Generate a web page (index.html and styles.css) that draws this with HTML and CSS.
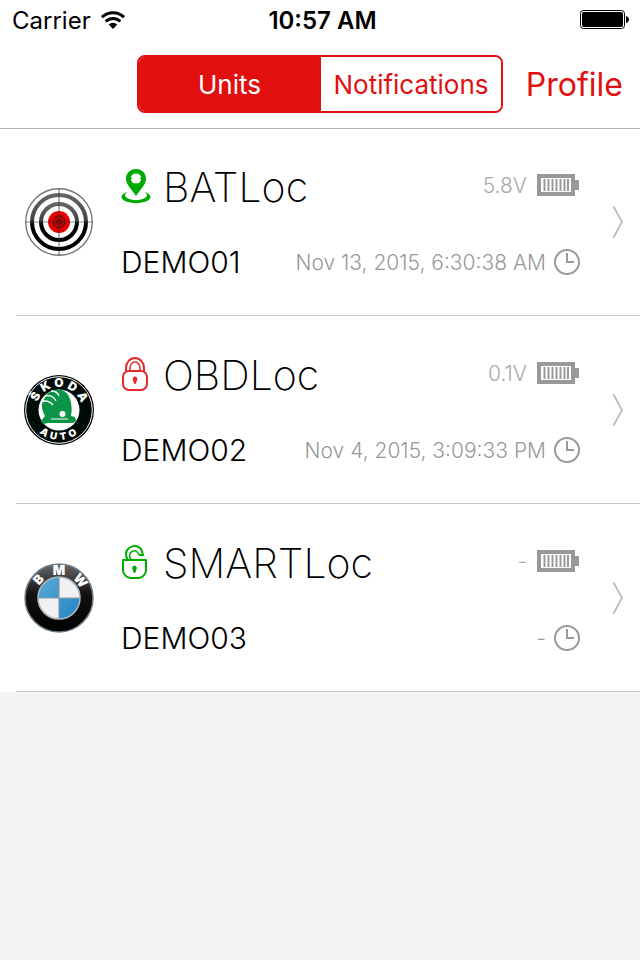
FILE: index.html
```html
<!DOCTYPE html>
<html lang="en">
<head>
  <meta charset="UTF-8" />
  <title>Units</title>
  <meta name="viewport" content="width=device-width, initial-scale=1.0" />
  <link rel="stylesheet" href="styles.css">
</head>
<body>

  <!-- Shared icons -->
  <svg class="sprite" aria-hidden="true">
    <symbol id="battery" viewBox="0 0 42 22">
      <path d="M2 2h34v18H2z" fill="#fff" stroke="#999" stroke-width="4" />
      <path d="M38 6h4v10h-4z" fill="#999" />
      <path d="M7.500 5v12M11.500 5v12M15.500 5v12M19.500 5v12M23.500 5v12M27.500 5v12M31 5v12" stroke="#999" stroke-width="2" />
    </symbol>
    <symbol id="clock" viewBox="0 0 26 26">
      <circle cx="13" cy="13" r="12" fill="none" stroke="#999" stroke-width="2" />
      <path d="M13 4v9h7" fill="none" stroke="#999" stroke-width="2" />
    </symbol>
    <symbol id="chevron" viewBox="0 0 12 34">
      <path d="M1.500 1.500L10 17 1.500 32.500" fill="none" stroke="#c0c0c0" stroke-width="2" />
    </symbol>
  </svg>

  <!-- Status bar -->
  <div class="status-bar">
    <div class="status-left">
      <span>Carrier</span>
      <svg class="wifi" viewBox="0 0 24 18" aria-hidden="true">
        <path d="M12 18L7.700 13.400a6.200 6.200 0 0 1 8.600 0z" />
        <path d="M4.700 10.500a10.500 10.500 0 0 1 14.600 0M1 6.200a16 16 0 0 1 22 0" fill="none" stroke="#000" stroke-width="3" />
      </svg>
    </div>
    <span class="status-time">10:57 AM</span>
    <svg class="status-battery" viewBox="0 0 49 20" aria-hidden="true">
      <rect x="0.500" y="0.500" width="44" height="18" rx="3" fill="none" stroke="#000" />
      <rect x="2" y="2" width="41" height="15" rx="2" />
      <path d="M46 6c4 1 4 6 0 7z" />
    </svg>
  </div>

  <!-- Navigation -->
  <header class="nav">
    <div class="segments">
      <button type="button" class="segment active" aria-pressed="true">Units</button>
      <button type="button" class="segment" aria-pressed="false">Notifications</button>
    </div>
    <a href="#profile" class="profile">Profile</a>
  </header>

  <!-- Unit list -->
  <main class="units">
    <a href="#demo01" class="unit">
      <svg class="logo" viewBox="0 0 70 70" aria-hidden="true">
        <defs>
          <linearGradient id="ring" x1="0" y1="0" x2="0" y2="1">
            <stop offset="0" stop-color="#666" />
            <stop offset="0.450" stop-color="#444" />
            <stop offset="0.550" stop-color="#000" />
          </linearGradient>
        </defs>
        <circle cx="35" cy="35" r="33.300" fill="#fff" stroke="#777" stroke-width="1.400" />
        <circle cx="35" cy="35" r="27" fill="none" stroke="url(#ring)" stroke-width="4" />
        <circle cx="35" cy="35" r="18" fill="none" stroke="url(#ring)" stroke-width="4" />
        <circle cx="35" cy="35" r="11" fill="#e80000" />
        <circle cx="35" cy="35" r="6" fill="#c00000" stroke="#8a0000" stroke-width="1.500" />
        <path d="M35 32l3 3-3 3-3-3z" fill="#900" stroke="#600000" />
        <path d="M35 2v66M2 35h66" stroke="#333" stroke-opacity="0.600" stroke-width="1.200" />
      </svg>
      <div class="unit-body">
        <div class="unit-line">
          <svg class="state" viewBox="0 0 30 36" aria-hidden="true">
            <path d="M15 1C9 1 5 5.300 5 11c0 6 6 10.500 10 17 4-6.500 10-11 10-17C25 5.300 21 1 15 1z" fill="#0a0" />
            <circle cx="15" cy="10.500" r="5.200" fill="#fff" />
            <path d="M15 4.500v2M15 14.500v2M9 10.500h2M19 10.500h2" stroke="#0a0" />
            <path d="M6.500 24C3 25 .5 26.800.5 29c0 3.500 6.500 6 14.500 6s14.500-2.500 14.500-6c0-2.200-2.500-4-6-5 2.300 1.500 3 3 2 4.500C24 30.700 20 32 15 32s-9-1.300-10.500-3.500c-1-1.500-.3-3 2-4.500z" fill="#0a0" />
          </svg>
          <h2>BATLoc</h2>
          <span class="meta voltage">5.8V</span>
          <svg class="battery" aria-hidden="true"><use href="#battery" /></svg>
        </div>
        <div class="unit-line">
          <span class="unit-name">DEMO01</span>
          <span class="meta">Nov 13, 2015, 6:30:38 AM</span>
          <svg class="clock" aria-hidden="true"><use href="#clock" /></svg>
        </div>
      </div>
      <svg class="chevron" aria-hidden="true"><use href="#chevron" /></svg>
    </a>

    <a href="#demo02" class="unit">
      <svg class="logo" viewBox="0 0 70 70" aria-hidden="true">
        <circle cx="35" cy="35" r="35" fill="#000" />
        <circle cx="35" cy="35" r="33.300" fill="#000b08" stroke="#fff" stroke-width="1" />
        <circle cx="35" cy="35" r="20.500" fill="#fff" />
        <path d="M21 41c-3-5-4-11-2-15l4-7 6-4c9-2 15 2 17 9 2 6 2 12 1 17l4 1 1 4-3 2H24l-5 1-2-3z" fill="#0a9448" />
        <path d="M17 27c4-2 9-1 12 3M21 21c5-1 9 1 11 5M27 16c4 0 7 2 8 5" fill="none" stroke="#fff" stroke-width="1.300" />
        <circle cx="38.500" cy="39" r="3" fill="#fff" />
        <path d="M27 44h17" stroke="#fff" />
        <g class="logo-letters">
          <text class="skoda" transform="rotate(-60 35 35)" x="35" y="12">Š</text>
          <text class="skoda" transform="rotate(-30 35 35)" x="35" y="12">K</text>
          <text class="skoda" x="35" y="12">O</text>
          <text class="skoda" transform="rotate(30 35 35)" x="35" y="12">D</text>
          <text class="skoda" transform="rotate(61 35 35)" x="35" y="12">A</text>
          <text class="auto" transform="rotate(33 35 35)" x="35" y="65">A</text>
          <text class="auto" transform="rotate(12 35 35)" x="35" y="65">U</text>
          <text class="auto" transform="rotate(-9 35 35)" x="35" y="65">T</text>
          <text class="auto" transform="rotate(-30 35 35)" x="35" y="65">O</text>
        </g>
      </svg>
      <div class="unit-body">
        <div class="unit-line">
          <svg class="state" viewBox="0 0 30 36" fill="none" stroke="#e8282d" aria-hidden="true">
            <rect x="2" y="15" width="24" height="19" rx="6" stroke-width="2" />
            <path d="M5 15v-3a9 10 0 0 1 18 0v3" stroke-width="2" />
            <path d="M9 15v-3a5 6 0 0 1 10 0v3" stroke-width="1.500" />
            <path d="M14 20.500a2.500 2.500 0 0 1 1.700 4.200l-.7 3h-2l-.7-3a2.500 2.500 0 0 1 1.700-4.200z" fill="#e8282d" stroke="none" />
          </svg>
          <h2>OBDLoc</h2>
          <span class="meta voltage">0.1V</span>
          <svg class="battery" aria-hidden="true"><use href="#battery" /></svg>
        </div>
        <div class="unit-line">
          <span class="unit-name">DEMO02</span>
          <span class="meta">Nov 4, 2015, 3:09:33 PM</span>
          <svg class="clock" aria-hidden="true"><use href="#clock" /></svg>
        </div>
      </div>
      <svg class="chevron" aria-hidden="true"><use href="#chevron" /></svg>
    </a>

    <a href="#demo03" class="unit">
      <svg class="logo" viewBox="0 0 70 70" aria-hidden="true">
        <defs>
          <linearGradient id="gloss" x1="0" y1="0" x2="0" y2="1">
            <stop offset="0" stop-color="#666" />
            <stop offset="0.450" stop-color="#111" />
            <stop offset="1" stop-color="#000" />
          </linearGradient>
          <linearGradient id="blue" x1="0" y1="0" x2="1" y2="1">
            <stop offset="0" stop-color="#5aaad8" />
            <stop offset="1" stop-color="#2482c4" />
          </linearGradient>
        </defs>
        <circle cx="35" cy="35" r="34" fill="url(#gloss)" stroke="#6f7f8b" stroke-width="1.500" />
        <circle cx="35" cy="35" r="21" fill="#f0f1f2" />
        <path d="M35 35V14a21 21 0 0 0-21 21zM35 35v21a21 21 0 0 0 21-21z" fill="url(#blue)" />
        <path d="M35 14v42M14 35h42" stroke="#8d99a1" stroke-width="1.200" />
        <circle cx="35" cy="35" r="21" fill="none" stroke="#a9b5bd" stroke-width="1.500" />
        <g class="logo-letters">
          <text class="bmw" transform="rotate(-48 35 35)" x="35" y="12">B</text>
          <text class="bmw" x="35" y="12">M</text>
          <text class="bmw" transform="rotate(51 35 35)" x="35" y="12">W</text>
        </g>
      </svg>
      <div class="unit-body">
        <div class="unit-line">
          <svg class="state" viewBox="0 0 30 36" fill="none" stroke="#0a0" aria-hidden="true">
            <path d="M2 16h23v10a8 8 0 0 1-8 8h-7a8 8 0 0 1-8-8z" stroke-width="2" stroke-linejoin="round" />
            <path d="M7 16C3.500 11 4.500 6 9 3.500c5-3 11-1 12 4l1 3.500h-4" stroke-width="2" />
            <path d="M10.500 16c-3-3-2.500-7 .5-8.500s5.500-.5 7 3.500" stroke-width="1.500" />
            <path d="M13.500 21.500a2.500 2.500 0 0 1 1.700 4.200l-.7 3h-2l-.7-3a2.500 2.500 0 0 1 1.700-4.200z" fill="#0a0" stroke="none" />
          </svg>
          <h2>SMARTLoc</h2>
          <span class="meta voltage">-</span>
          <svg class="battery" aria-hidden="true"><use href="#battery" /></svg>
        </div>
        <div class="unit-line">
          <span class="unit-name">DEMO03</span>
          <span class="meta">-</span>
          <svg class="clock" aria-hidden="true"><use href="#clock" /></svg>
        </div>
      </div>
      <svg class="chevron" aria-hidden="true"><use href="#chevron" /></svg>
    </a>
  </main>

</body>
</html>
```
FILE: styles.css
```css
* {
  box-sizing: border-box;
}

body {
  margin: 0;
  min-height: 100vh;
  background-color: #f3f3f3;
  color: #000;
  font-family: Inter, "Liberation Sans", sans-serif;
}

.sprite {
  display: none;
}

svg {
  flex: none;
}

/* Status bar */
.status-bar {
  display: grid;
  grid-template-columns: 1fr auto 1fr;
  align-items: center;
  height: 40px;
  padding: 0 11px 0 12px;
  background-color: #fff;
  font-size: 24px;
}

.status-left {
  display: flex;
  align-items: center;
  gap: 10px;
}

.status-time {
  padding-left: 4px;
  font-weight: 600;
}

.wifi {
  width: 24px;
  height: 18px;
}

.status-battery {
  width: 49px;
  height: 20px;
  justify-self: end;
}

/* Navigation */
.nav {
  position: relative;
  display: grid;
  grid-template-columns: 1fr auto 1fr;
  align-items: center;
  height: 88px;
  padding: 0 17px;
  background-color: #fff;
  box-shadow: 0 1px #b2b2b2;
}

.segments {
  grid-column: 2;
  display: grid;
  grid-template-columns: 1fr 1fr;
  width: 366px;
  height: 58px;
  border: 2px solid #e20f0f;
  border-radius: 8px;
  overflow: hidden;
}

.segment {
  padding: 0;
  border: none;
  background-color: #fff;
  color: #e20f0f;
  font-family: inherit;
  font-size: 26px;
  cursor: pointer;
}

.segment + .segment {
  border-left: 1px solid #e20f0f;
}

.segment.active {
  background-color: #e20f0f;
  color: #fff;
}

.profile {
  justify-self: end;
  color: #e20f0f;
  font-size: 32px;
  text-decoration: none;
}

/* Unit list */
.units {
  background-color: #fff;
}

.unit {
  display: flex;
  align-items: center;
  height: 188px;
  padding: 0 16px 0 24px;
  color: inherit;
  text-decoration: none;
  background: linear-gradient(#c8c8c8, #c8c8c8) 16px 100% / 100% 1px no-repeat;
}

.logo {
  width: 70px;
  height: 70px;
}

.logo-letters {
  fill: #fff;
  font-weight: 900;
  text-anchor: middle;
}

.skoda {
  font-size: 12px;
}

.auto {
  font-size: 10px;
}

.bmw {
  font-size: 13px;
}

.unit-body {
  flex: 1;
  display: flex;
  flex-direction: column;
  gap: 26px;
  margin: 2px 32px 0 27px;
}

.unit-line {
  display: flex;
  align-items: center;
}

.state {
  width: 30px;
  height: 36px;
}

h2 {
  flex: 1;
  margin: 2px 0 0 12px;
  font-size: 41px;
  font-weight: 200;
  line-height: 50px;
}

.unit-name {
  flex: 1;
  font-size: 30px;
  font-weight: 300;
  line-height: 48px;
}

.meta {
  color: #999;
  font-size: 21px;
  font-weight: 300;
}

.voltage {
  margin-bottom: 2px;
  color: #aaa;
}

.battery {
  width: 42px;
  height: 22px;
  margin: 0 1px 2px 10px;
}

.clock {
  width: 26px;
  height: 26px;
  margin-left: 8px;
}

.chevron {
  width: 12px;
  height: 34px;
}
```
